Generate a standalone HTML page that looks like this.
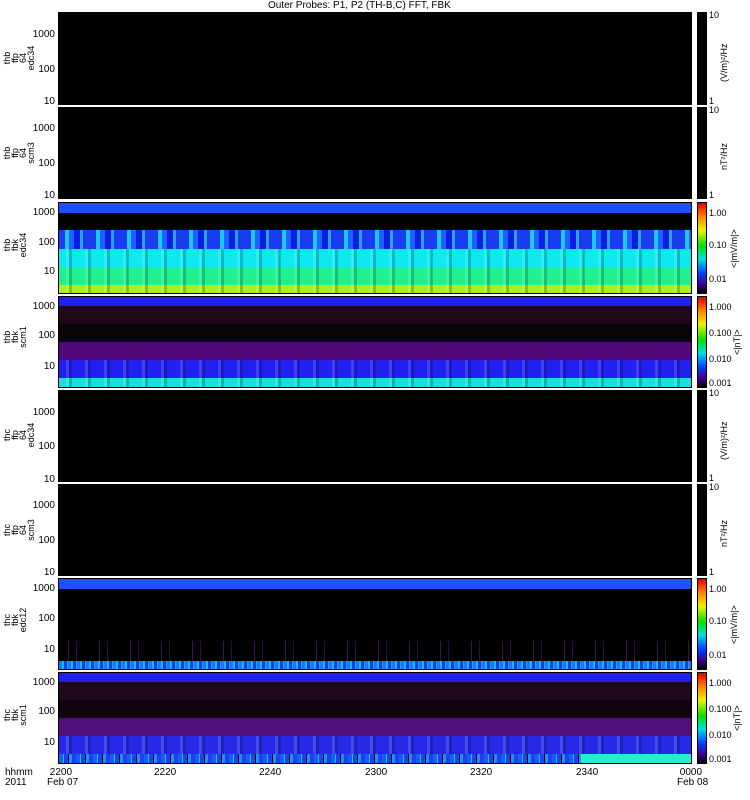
<!DOCTYPE html>
<html><head><style>
body{margin:0;width:750px;height:800px;background:#fff;position:relative;overflow:hidden;font-family:"Liberation Sans",sans-serif;font-size:10px;color:#000}
.p{position:absolute;left:58px;width:634px;border:1px solid #000;box-sizing:border-box;background:#000;overflow:hidden}
.b{position:absolute;left:0;right:0}
.cb{position:absolute;left:697px;width:10px;border:1px solid #000;box-sizing:border-box}
.t{position:absolute;font-size:10px;line-height:10px}
.yl{position:absolute;text-align:right;width:30px;left:25px;font-size:10px}
.lab{position:absolute;transform:rotate(-90deg);transform-origin:left top;font-size:9px;line-height:8px;text-align:center;width:60px}
.cl{position:absolute;transform:rotate(-90deg);transform-origin:left top;font-size:9px;white-space:nowrap}
.cn{position:absolute;left:709px;font-size:9px}
.s{background-image:repeating-linear-gradient(90deg,rgba(0,0,0,0) 0 7px,rgba(255,255,255,.15) 7px 10px,rgba(0,0,0,.2) 10px 13px,rgba(0,0,0,0) 13px 19px)}
</style></head><body>
<div class="t" style="left:268px;top:1px">Outer Probes: P1, P2 (TH-B,C) FFT, FBK</div>

<div class="p" style="top:12px;height:93px"></div>
<div class="cb" style="top:12px;height:93px;background:#000"></div>
<div class="cn" style="top:10px">10</div><div class="cn" style="top:96px">1</div>
<div class="cl" style="left:719px;top:82px">(V/m)²/Hz</div>
<div class="yl" style="top:29px">1000</div><div class="yl" style="top:64px">100</div><div class="yl" style="top:96px">10</div>
<div class="lab" style="left:3px;top:88px">thb<br>ffp<br>64<br>edc34</div>

<div class="p" style="top:107px;height:92px"></div>
<div class="cb" style="top:107px;height:92px;background:#000"></div>
<div class="cn" style="top:105px">10</div><div class="cn" style="top:190px">1</div>
<div class="cl" style="left:719px;top:170px">nT²/Hz</div>
<div class="yl" style="top:123px">1000</div><div class="yl" style="top:158px">100</div><div class="yl" style="top:190px">10</div>
<div class="lab" style="left:3px;top:183px">thb<br>ffp<br>64<br>scm3</div>

<div class="p" style="top:202px;height:92px">
<div class="b" style="top:0;height:10px;background:#1e50ff"></div>
<div class="b" style="top:27px;height:19px;background-image:repeating-linear-gradient(90deg,#1a3cf0 0 6px,#1ec8ff 6px 10px,#2060ff 10px 15px,#0a20e0 15px 21px,#30a0ff 21px 24px,#1a3cf0 24px 31px)"></div>
<div class="b s" style="top:46px;height:18px;background-color:#10e8f0"></div>
<div class="b s" style="top:64px;height:18px;background-color:#20f090"></div>
<div class="b s" style="top:82px;height:10px;background-color:#a8f020"></div>
</div>
<div class="cb" style="top:202px;height:92px;background:linear-gradient(#e00000,#ff8000 15%,#f0f000 30%,#00e000 48%,#00e0e0 62%,#0040ff 78%,#400090 90%,#000)"></div>
<div class="cn" style="top:208px">1.00</div><div class="cn" style="top:240px">0.10</div><div class="cn" style="top:274px">0.01</div>
<div class="cl" style="left:729px;top:268px">&lt;|mV/m|&gt;</div>
<div class="yl" style="top:207px">1000</div><div class="yl" style="top:237px">100</div><div class="yl" style="top:266px">10</div>
<div class="lab" style="left:3px;top:275px">thb<br>fbk<br>edc34</div>

<div class="p" style="top:296px;height:92px">
<div class="b" style="top:0;height:9px;background:#2020f0"></div>
<div class="b" style="top:9px;height:18px;background:#200818"></div>
<div class="b" style="top:27px;height:18px;background:#080408"></div>
<div class="b" style="top:45px;height:18px;background:#50087a"></div>
<div class="b s" style="top:63px;height:18px;background-color:#2020f0"></div>
<div class="b s" style="top:81px;height:11px;background-color:#18e0e0"></div>
</div>
<div class="cb" style="top:296px;height:92px;background:linear-gradient(#e00000,#ff8000 15%,#f0f000 30%,#00e000 48%,#00e0e0 62%,#0040ff 78%,#400090 90%,#000)"></div>
<div class="cn" style="top:302px">1.000</div><div class="cn" style="top:328px">0.100</div><div class="cn" style="top:354px">0.010</div><div class="cn" style="top:378px">0.001</div>
<div class="cl" style="left:732px;top:355px">&lt;|nT|&gt;</div>
<div class="yl" style="top:301px">1000</div><div class="yl" style="top:330px">100</div><div class="yl" style="top:361px">10</div>
<div class="lab" style="left:3px;top:367px">thb<br>fbk<br>scm1</div>

<div class="p" style="top:390px;height:92px"></div>
<div class="cb" style="top:390px;height:92px;background:#000"></div>
<div class="cn" style="top:388px">10</div><div class="cn" style="top:473px">1</div>
<div class="cl" style="left:719px;top:460px">(V/m)²/Hz</div>
<div class="yl" style="top:407px">1000</div><div class="yl" style="top:441px">100</div><div class="yl" style="top:474px">10</div>
<div class="lab" style="left:3px;top:465px">thc<br>ffp<br>64<br>edc34</div>

<div class="p" style="top:484px;height:92px"></div>
<div class="cb" style="top:484px;height:92px;background:#000"></div>
<div class="cn" style="top:482px">10</div><div class="cn" style="top:567px">1</div>
<div class="cl" style="left:719px;top:547px">nT²/Hz</div>
<div class="yl" style="top:500px">1000</div><div class="yl" style="top:535px">100</div><div class="yl" style="top:567px">10</div>
<div class="lab" style="left:3px;top:560px">thc<br>ffp<br>64<br>scm3</div>

<div class="p" style="top:578px;height:92px">
<div class="b" style="top:0;height:10px;background:#1e50ff"></div>
<div class="b" style="top:62px;height:20px;background-image:repeating-linear-gradient(90deg,transparent 0 9px,#401060 9px 10px,transparent 10px 17px,#300850 17px 18px,transparent 18px 31px)"></div>
<div class="b" style="top:82px;height:10px;background-image:repeating-linear-gradient(90deg,#1878ff 0 3px,#10c0f0 3px 5px,#0a40e0 5px 8px,#1ea0ff 8px 9px)"></div>
</div>
<div class="cb" style="top:578px;height:92px;background:linear-gradient(#e00000,#ff8000 15%,#f0f000 30%,#00e000 48%,#00e0e0 62%,#0040ff 78%,#400090 90%,#000)"></div>
<div class="cn" style="top:584px">1.00</div><div class="cn" style="top:616px">0.10</div><div class="cn" style="top:650px">0.01</div>
<div class="cl" style="left:729px;top:644px">&lt;|mV/m|&gt;</div>
<div class="yl" style="top:583px">1000</div><div class="yl" style="top:613px">100</div><div class="yl" style="top:644px">10</div>
<div class="lab" style="left:3px;top:650px">thc<br>fbk<br>edc12</div>

<div class="p" style="top:672px;height:92px">
<div class="b" style="top:0;height:9px;background:#2020f0"></div>
<div class="b" style="top:9px;height:18px;background:#200818"></div>
<div class="b" style="top:27px;height:18px;background:#100410"></div>
<div class="b" style="top:45px;height:18px;background:#50107a"></div>
<div class="b s" style="top:63px;height:18px;background-color:#2828e8"></div>
<div class="b" style="top:81px;height:11px;background-image:repeating-linear-gradient(90deg,#1060ff 0 4px,#20c0f0 4px 5px,#2040f0 5px 9px,#000 9px 10px,#1890ff 10px 13px,#2040f0 13px 17px)"></div>
<div class="b" style="right:0;left:auto;width:110px;top:81px;height:11px;background:#20f0d0"></div>
</div>
<div class="cb" style="top:672px;height:92px;background:linear-gradient(#e00000,#ff8000 15%,#f0f000 30%,#00e000 48%,#00e0e0 62%,#0040ff 78%,#400090 90%,#000)"></div>
<div class="cn" style="top:678px">1.000</div><div class="cn" style="top:704px">0.100</div><div class="cn" style="top:730px">0.010</div><div class="cn" style="top:754px">0.001</div>
<div class="cl" style="left:732px;top:731px">&lt;|nT|&gt;</div>
<div class="yl" style="top:677px">1000</div><div class="yl" style="top:706px">100</div><div class="yl" style="top:737px">10</div>
<div class="lab" style="left:3px;top:745px">thc<br>fbk<br>scm1</div>

<div class="t" style="left:5px;top:768px">hhmm<br>2011</div>
<div class="t" style="left:47px;top:768px">&nbsp;2200<br>Feb 07</div>
<div class="t" style="left:154px;top:768px">2220</div>
<div class="t" style="left:259px;top:768px">2240</div>
<div class="t" style="left:365px;top:768px">2300</div>
<div class="t" style="left:470px;top:768px">2320</div>
<div class="t" style="left:576px;top:768px">2340</div>
<div class="t" style="left:677px;top:768px">&nbsp;0000<br>Feb 08</div>
</body></html>
